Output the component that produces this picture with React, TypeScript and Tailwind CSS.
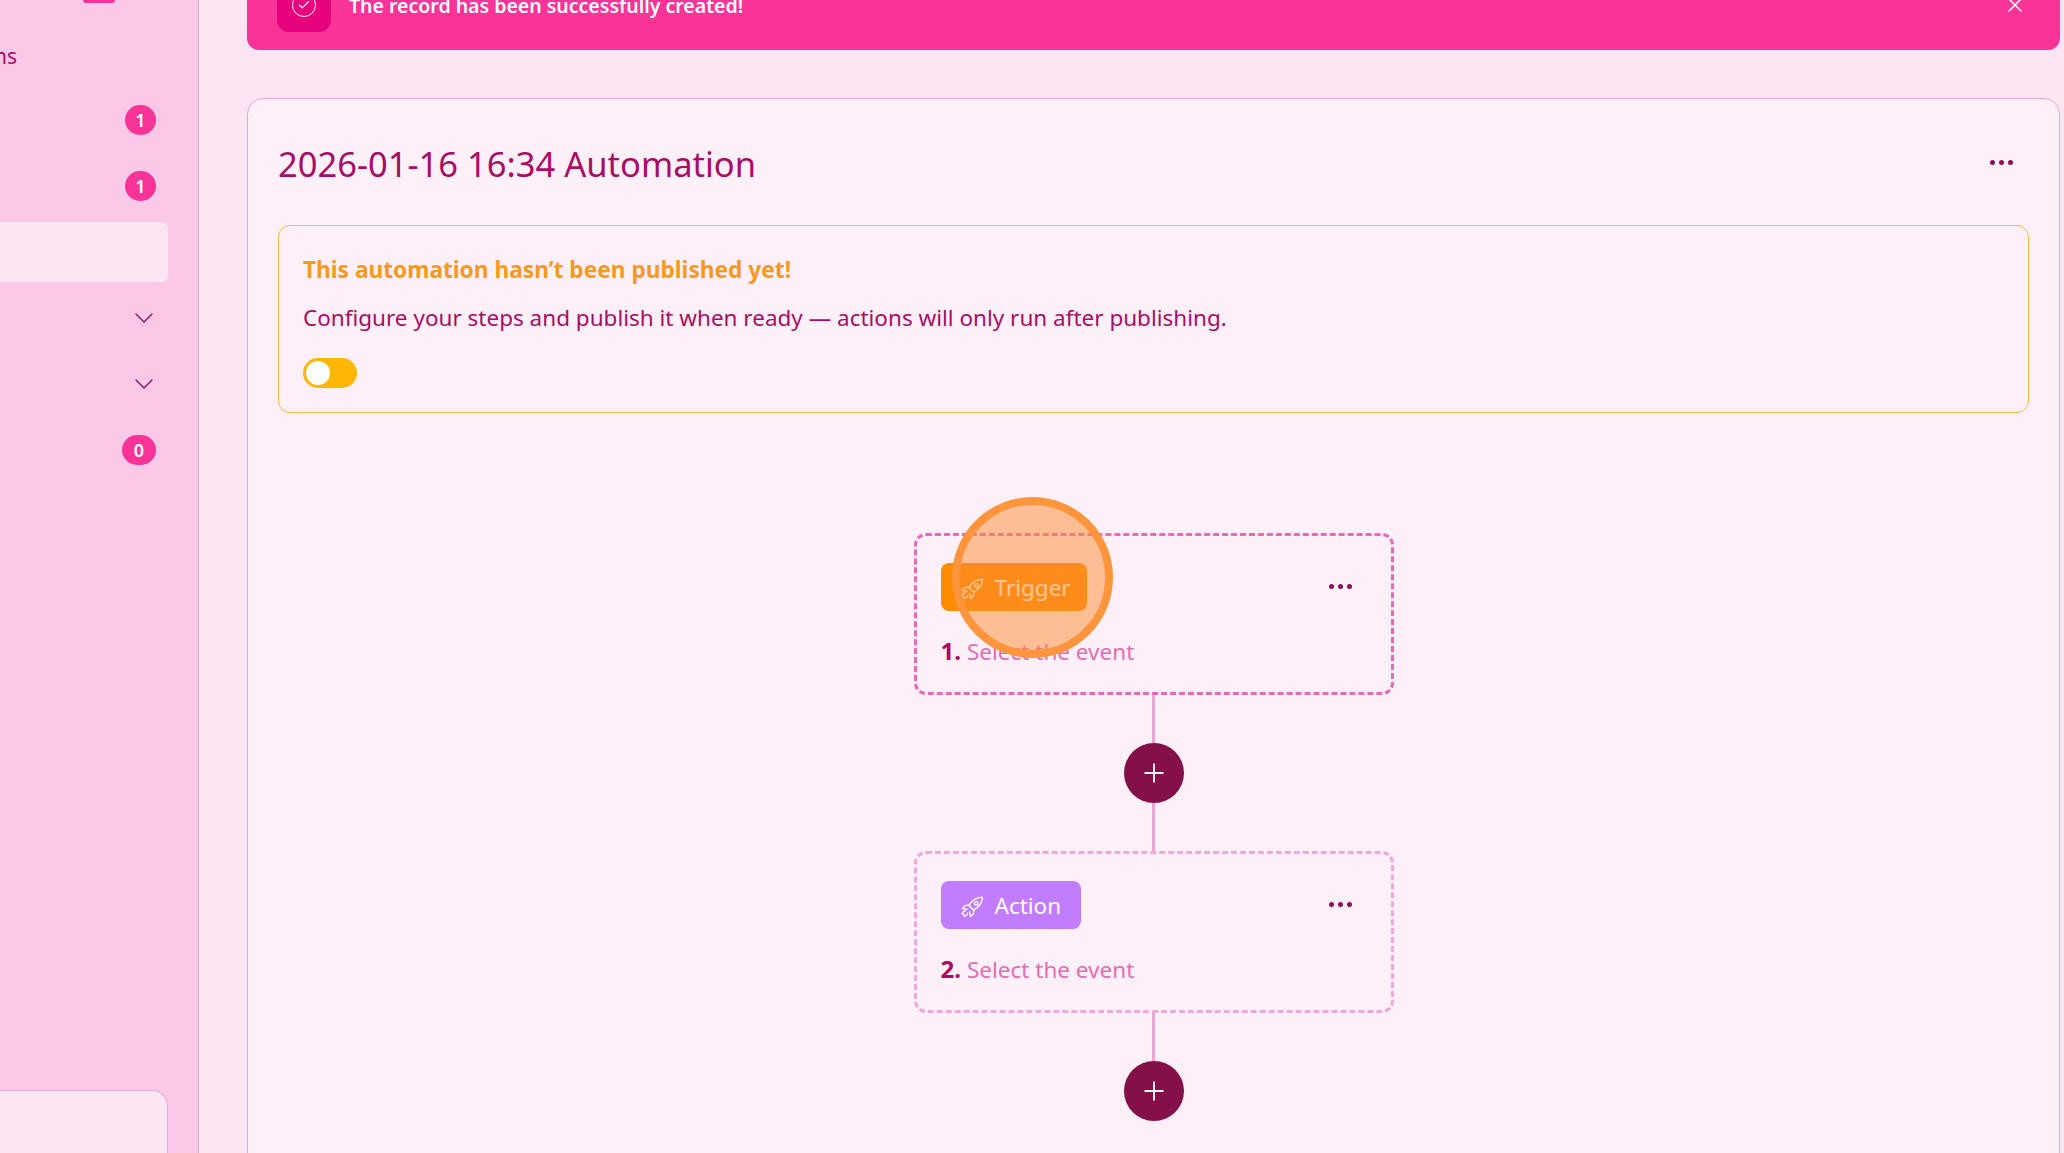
import { ChevronDown, Plus, X, Check } from 'lucide-react';

const Dots = ({ className = '' }: { className?: string }) => (
  <div className={`flex gap-[4px] ${className}`}>
    <span className="w-[5px] h-[5px] rounded-full bg-[#8f0f55]" />
    <span className="w-[5px] h-[5px] rounded-full bg-[#8f0f55]" />
    <span className="w-[5px] h-[5px] rounded-full bg-[#8f0f55]" />
  </div>
);

const RocketIcon = () => (
  <svg width="28" height="28" viewBox="0 0 24 24" fill="none" stroke="currentColor" strokeWidth="1.15" strokeLinecap="round" strokeLinejoin="round" className="mt-[4px] shrink-0">
    {/* body */}
    <path d="M21 3.5c-5.2.2-9.2 2.6-11.6 7.2l3.9 3.9c4.6-2.4 7.5-6 7.7-11.1z" />
    <circle cx="15.6" cy="8.9" r="1.5" />
    {/* fins */}
    <path d="M9.6 10.3l-3.6.5-2.2 2.6 3.9.5" />
    <path d="M13.7 14.4l-.5 3.6-2.6 2.2-.5-3.9" />
    {/* flames */}
    <path d="M6.2 15.2c-1.4.3-2.4 1.3-2.7 2.6 1-.2 1.6.2 1.5 1.2-.1.9.6 1.3 1.4.9 1-.5 1.7-1.4 2-2.6" />
  </svg>
);

const Badge = ({ value, wide = false }: { value: string; wide?: boolean }) => (
  <span className={`h-[30px] rounded-full bg-[#f93398] text-white text-[18px] font-semibold flex items-center justify-center ${wide ? 'w-[34px]' : 'w-[31px]'}`}>
    {value}
  </span>
);

const Row = ({ children, active = false }: { children?: React.ReactNode; active?: boolean }) => (
  <div className={`h-[60px] flex items-center justify-end rounded-r-md ${active ? 'bg-[#fde5f3]' : ''}`}>
    {children}
  </div>
);

const Sidebar = () => (
  <aside className="w-[199px] shrink-0 h-full bg-[#fcc8e8] border-r border-[#eea6d8] flex flex-col justify-between overflow-hidden">
    <div className="flex flex-col">
      <div className="h-[3px] flex">
        <span className="ml-[83px] w-[32px] h-[3px] rounded-b-md bg-[#f93398]" />
      </div>
      <div className="h-[87px] -ml-[6px] flex items-center pt-[19px] text-[21px] text-[#a80d66] leading-none">ns</div>
      <div className="flex flex-col gap-[6px] mr-[30px]">
        <Row><span className="mr-[12px]"><Badge value="1" /></span></Row>
        <Row><span className="mr-[12px]"><Badge value="1" /></span></Row>
        <Row active />
        <Row><ChevronDown size={32} strokeWidth={1} className="mr-[8px] text-[#8f0f55]" /></Row>
        <Row><ChevronDown size={32} strokeWidth={1} className="mr-[8px] text-[#8f0f55]" /></Row>
        <Row><span className="mr-[12px]"><Badge value="0" wide /></span></Row>
      </div>
    </div>
    <div className="h-[63px] mr-[30px] bg-[#fde5f3] border-t border-r border-[#eea6d8] rounded-tr-2xl" />
  </aside>
);

const StepCard = ({ n, label, badgeClass, borderClass, highlight = false }: { n: string; label: string; badgeClass: string; borderClass: string; highlight?: boolean }) => (
  <div className={`relative w-[480px] h-[162px] rounded-xl border-[3px] border-dashed ${borderClass} pl-[24px] pr-[24px] pt-[27px]`}>
    <div className="flex items-center justify-between">
      <div className={`h-[48px] rounded-lg flex items-center gap-[9px] pl-[17px] text-white text-[22.5px] ${badgeClass}`}>
        <RocketIcon />
        <span className="mt-[2px]">{label}</span>
      </div>
      <Dots className="mr-[15px] mb-[2px]" />
    </div>
    <div className="mt-[24px] text-[22.5px] leading-[32px] text-[#e36cb4]">
      <span className="font-bold text-[#b0065f] text-[24px] mr-[6px]">{n}.</span>Select the event
    </div>
    {highlight && (
      <div className="absolute left-[35px] top-[-39px] w-[161px] h-[161px] rounded-full border-[8px] border-[#fc953c] bg-[#ff8c32]/50" />
    )}
  </div>
);

const Connector = ({ h }: { h: string }) => <div className={`w-[3px] bg-[#eda3d4] ${h}`} />;

const AddButton = () => (
  <button className="w-[60px] h-[60px] rounded-full bg-[#850f48] text-white flex items-center justify-center shrink-0">
    <Plus size={30} strokeWidth={1.5} />
  </button>
);

export default function App() {
  return (
    <div className="h-[1153px] w-[2064px] overflow-hidden flex bg-[#fde5f3] font-['Noto_Sans',sans-serif]">
      <Sidebar />
      <main className="flex-1 pl-[48px] pr-[4px] overflow-hidden">
        {/* success toast, scrolled partly out of view */}
        <div className="-mt-[40px] h-[90px] rounded-xl bg-[#f93398] flex items-center pl-[30px] pr-[33px] text-white">
          <div className="w-[54px] h-[54px] rounded-xl bg-[#e6007e] flex items-center justify-center">
            <span className="w-[24px] h-[24px] rounded-full border-[1.5px] border-white flex items-center justify-center">
              <Check size={14} strokeWidth={2} />
            </span>
          </div>
          <span className="ml-[18px] mt-[2px] text-[19.5px] font-semibold flex-1">The record has been successfully created!</span>
          <X size={24} strokeWidth={1.5} />
        </div>

        <section className="mt-[48px] rounded-2xl border border-[#e8a5d5] bg-[#fdf0f9] px-[30px] pt-[40px] h-[1100px]">
          <div className="flex items-center justify-between h-[50px]">
            <h1 className="text-[34.5px] text-[#a80d66] leading-none">2026-01-16 16:34 Automation</h1>
            <Dots className="mr-[16px] mb-[4px]" />
          </div>

          <div className="mt-[36px] h-[188px] rounded-xl border border-[#f5b942] px-[24px] pt-[28px]">
            <div className="text-[22.7px] leading-[32px] font-bold text-[#f5991f]">This automation hasn’t been published yet!</div>
            <div className="mt-[16px] text-[22.5px] leading-[32px] text-[#a80d66]">Configure your steps and publish it when ready — actions will only run after publishing.</div>
            <div className="mt-[24px] w-[54px] h-[30px] rounded-full bg-[#ffb705] flex items-center pl-[3px]">
              <span className="w-[24px] h-[24px] rounded-full bg-white" />
            </div>
          </div>

          <div className="mt-[120px] flex flex-col items-center">
            <StepCard n="1" label="Trigger" badgeClass="bg-[#ff8c00] w-[146px]" borderClass="border-[#e36cb4]" highlight />
            <Connector h="h-[48px]" />
            <AddButton />
            <Connector h="h-[48px]" />
            <StepCard n="2" label="Action" badgeClass="bg-[#c27cff] w-[140px]" borderClass="border-[#f0a8d8]" />
            <Connector h="h-[48px]" />
            <AddButton />
          </div>
        </section>
      </main>
    </div>
  );
}
